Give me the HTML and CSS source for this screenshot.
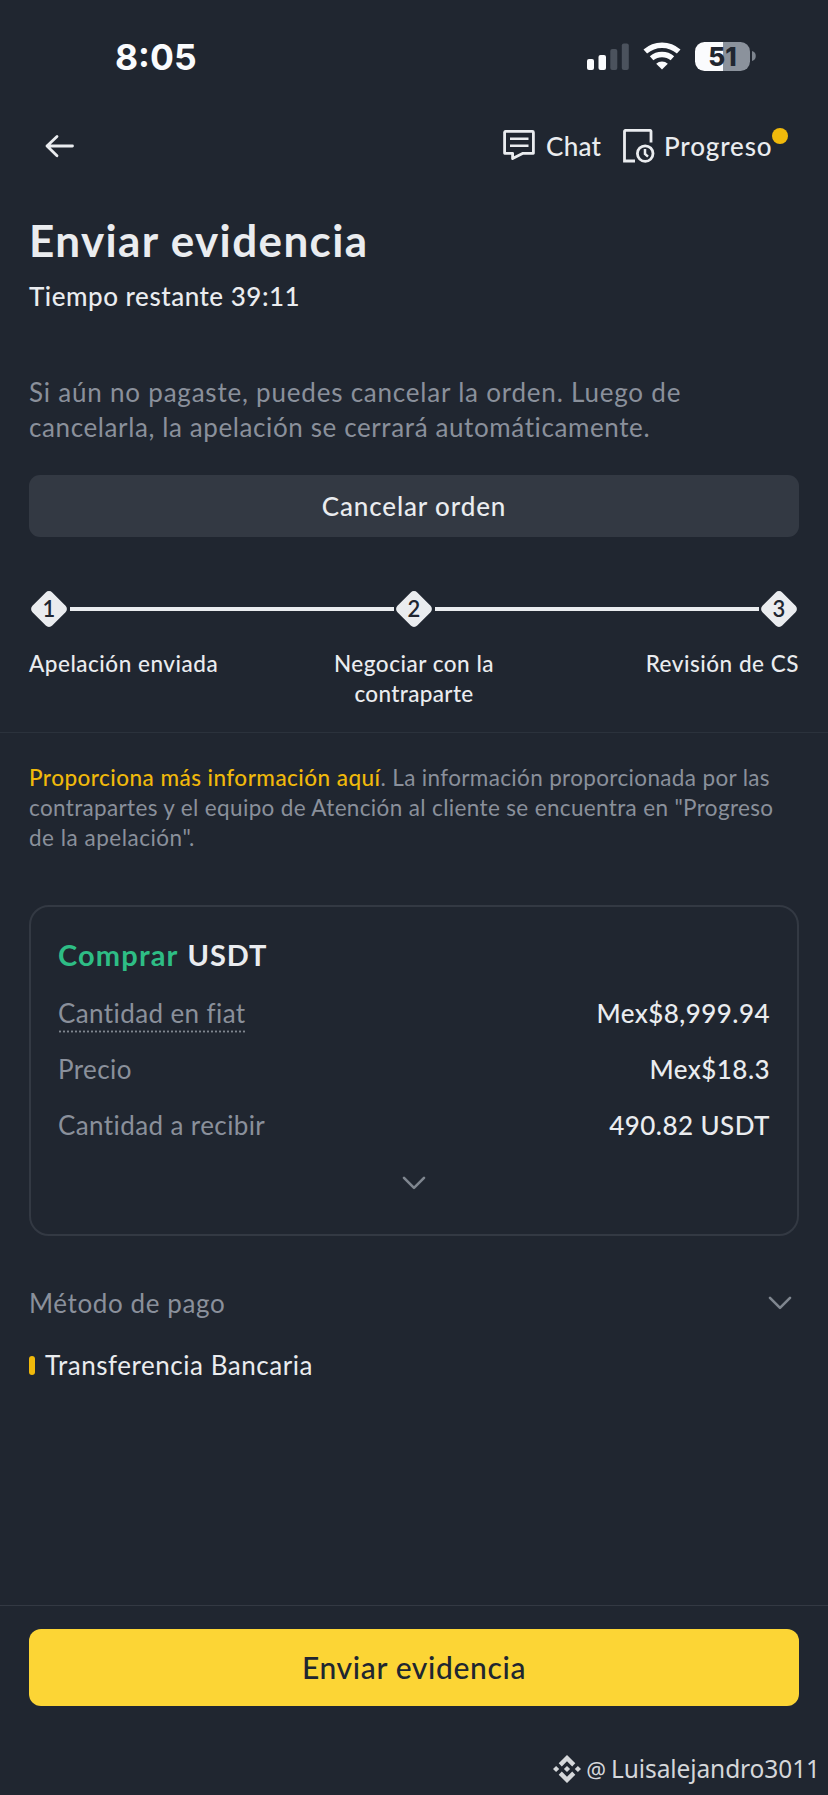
FILE: index.html
```html
<!DOCTYPE html>
<html lang="es">
<head>
<meta charset="utf-8">
<title>Enviar evidencia</title>
<link rel="stylesheet" href="styles.css">
</head>
<body>
<div class="screen">
  <div class="status">
    <span class="time">8:05</span>
    <div class="indicators">
      <svg class="signal" width="42" height="27" viewBox="0 0 42 27">
        <rect x="0" y="16" width="7" height="11" rx="2" fill="#fafbfd"/>
        <rect x="11.5" y="12" width="7.5" height="15" rx="2" fill="#fafbfd"/>
        <rect x="23.3" y="6" width="7" height="21" rx="2" fill="#4b525d"/>
        <rect x="34.8" y="0.5" width="7" height="26.5" rx="2" fill="#4b525d"/>
      </svg>
      <svg class="wifi" width="38" height="28" viewBox="0 0 38 28">
        <g fill="none" stroke="#fafbfd" stroke-width="5.4">
          <path d="M2.3 9.6A25 25 0 0 1 35.7 9.6"/>
          <path d="M8.6 16.3A16 16 0 0 1 29.4 16.3"/>
        </g>
        <path d="M19 27.5L13.2 21.8A8.5 8.5 0 0 1 24.8 21.8Z" fill="#fafbfd"/>
      </svg>
      <div class="battery">
        <div class="cell"><span>51</span></div>
        <svg width="4" height="10" viewBox="0 0 4 10"><path d="M0 0A5.2 5.2 0 0 1 0 10Z" fill="#7d848e"/></svg>
      </div>
    </div>
  </div>

  <header class="nav">
    <svg class="back" width="30" height="24" viewBox="0 0 30 24" fill="none" stroke="#eaecef" stroke-width="2.8" stroke-linecap="round" stroke-linejoin="round">
      <path d="M27.5 12H2M12 2.4L2 12L12 21.8"/>
    </svg>
    <div class="actions">
      <svg class="chat-icon" width="32" height="30" viewBox="0 0 32 30" fill="none" stroke="#eaecef" stroke-width="2.8">
        <path d="M1.6 2.2a1 1 0 0 1 1-.8H29.4a1 1 0 0 1 1 1V23.3H20L9.6 28.6V23.3H1.6Z" stroke-linejoin="round"/>
        <path d="M7 8.8H25.5M7 15.8H25.5" stroke-width="2.5"/>
      </svg>
      <span class="action chat">Chat</span>
      <svg class="progress-icon" width="32" height="34" viewBox="0 0 32 34" fill="none" stroke="#eaecef" stroke-width="2.8">
        <path d="M12 32H1.5V2.2a.8.8 0 0 1 .8-.8H27.2a.8.8 0 0 1 .8.8V13.5"/>
        <circle cx="22.2" cy="24.6" r="7.8"/>
        <path d="M22 20V25L25 27.6" stroke-width="2.5"/>
      </svg>
      <span class="action progreso">Progreso<i class="dot"></i></span>
    </div>
  </header>

  <main class="content">
    <h1 class="title">Enviar evidencia</h1>
    <p class="remaining">Tiempo restante 39:11</p>
    <p class="hint">Si aún no pagaste, puedes cancelar la orden. Luego de<br><span class="hint-last">cancelarla, la apelación se cerrará automáticamente.</span></p>
    <button class="cancel">Cancelar orden</button>

    <div class="track">
      <div class="step"><svg width="38" height="38" viewBox="0 0 38 38"><rect x="5" y="5" width="28" height="28" rx="4.6" transform="rotate(45 19 19)" fill="#eaecef"/></svg><span>1</span></div>
      <div class="line"></div>
      <div class="step"><svg width="38" height="38" viewBox="0 0 38 38"><rect x="5" y="5" width="28" height="28" rx="4.6" transform="rotate(45 19 19)" fill="#eaecef"/></svg><span>2</span></div>
      <div class="line"></div>
      <div class="step"><svg width="38" height="38" viewBox="0 0 38 38"><rect x="5" y="5" width="28" height="28" rx="4.6" transform="rotate(45 19 19)" fill="#eaecef"/></svg><span>3</span></div>
    </div>
    <div class="labels">
      <span class="label">Apelación enviada</span>
      <span class="label mid">Negociar con la<br><span class="tight">contraparte</span></span>
      <span class="label end">Revisión de CS</span>
    </div>
  </main>

  <section class="details">
    <p class="info"><b>Proporciona más información aquí</b>. La información proporcionada por las<br>contrapartes y el equipo de Atención al cliente se encuentra en "Progreso<br><span class="info-last">de la apelación".</span></p>

    <div class="card">
      <h2 class="pair"><span class="buy">Comprar</span> <span class="coin">USDT</span></h2>
      <div class="row"><span class="key dotted">Cantidad en fiat</span><span class="value">Mex$8,999.94</span></div>
      <div class="row"><span class="key">Precio</span><span class="value">Mex$18.3</span></div>
      <div class="row"><span class="key">Cantidad a recibir</span><span class="value">490.82 USDT</span></div>
      <div class="more"><svg width="24" height="14" viewBox="0 0 24 14" fill="none" stroke="#7f868f" stroke-width="2.6" stroke-linecap="round" stroke-linejoin="round"><path d="M2 1.8L12 11.8L22 1.8"/></svg></div>
    </div>

    <div class="method"><span>Método de pago</span><svg width="24" height="14" viewBox="0 0 24 14" fill="none" stroke="#7f868f" stroke-width="2.6" stroke-linecap="round" stroke-linejoin="round"><path d="M2 1.8L12 11.8L22 1.8"/></svg></div>
    <div class="bank"><i class="mark"></i><span>Transferencia Bancaria</span></div>
  </section>

  <footer class="footer">
    <button class="send">Enviar evidencia</button>
    <div class="credit">
      <svg width="28" height="28" viewBox="0 0 28 28" fill="#d5d7da">
        <path d="M14 0L22.3 8.3L19.2 11.4L14 6.2L8.8 11.4L5.7 8.3Z"/>
        <path d="M14 28L22.3 19.7L19.2 16.6L14 21.8L8.8 16.6L5.7 19.7Z"/>
        <path d="M3.1 10.9L6.2 14L3.1 17.1L0 14ZM24.9 10.9L28 14L24.9 17.1L21.8 14ZM14 10.9L17.1 14L14 17.1L10.9 14Z"/>
      </svg>
      <span class="at">@</span>
      <span class="user">Luisalejandro3011</span>
    </div>
  </footer>
</div>
</body>
</html>
```
FILE: styles.css
```css
* { box-sizing: border-box; margin: 0; padding: 0; }
body { background: #202630; color: #eaecef; font-family: Lato, "Open Sans", sans-serif; font-size: 26px; }
svg { display: block; flex: none; }
.screen { width: 828px; height: 1795px; display: flex; flex-direction: column; overflow: hidden; white-space: nowrap; }

.status { height: 113px; display: flex; justify-content: space-between; align-items: center; padding: 0 73px 0 115px; }
.time { margin-top: 2px; font: 700 35.5px/40px Inter, sans-serif; color: #fafbfd; }
.indicators { display: flex; align-items: center; gap: 14px; margin-right: -1px; }
.signal { margin-top: -1px; }
.wifi { margin-top: -1px; }
.battery { display: flex; align-items: center; gap: 2px; margin-top: -1px; }
.cell { width: 55px; height: 29px; border-radius: 9.5px; background: linear-gradient(90deg, #fafbfd 28px, #8b929c 28px); display: flex; align-items: center; justify-content: center; }
.cell span { font: 800 26px/29px Inter, sans-serif; color: #202630; }

.nav { height: 64px; display: flex; justify-content: space-between; align-items: center; padding: 0 55px 0 45px; }
.back { margin-top: 1px; }
.actions { display: flex; align-items: center; }
.action { font-weight: 500; line-height: 36px; }
.chat { margin: 1px 0 0 11px; letter-spacing: .3px; width: 57px; }
.progress-icon { margin: 1px 0 0 20px; }
.progreso { margin: 1px 0 0 9px; letter-spacing: .85px; position: relative; width: 109px; }
.dot { position: absolute; right: -15px; top: 0; width: 16px; height: 16px; border-radius: 50%; background: #f0b90b; }

.content { padding: 35px 29px 24px; border-bottom: 1px solid #2b323c; }
.title { font-size: 44px; font-weight: 700; line-height: 56px; letter-spacing: 1.38px; }
.remaining { margin-top: 10px; font-weight: 500; line-height: 36px; letter-spacing: .52px; }
.hint { margin-top: 61px; line-height: 35px; color: #8a909b; letter-spacing: .79px; }
.hint-last { letter-spacing: .61px; }
.cancel { display: block; width: 770px; height: 62px; margin-top: 30px; padding-bottom: 1px; border: 0; border-radius: 11px; background: #333943; color: #eaecef; font: 500 26px/36px Lato, sans-serif; letter-spacing: .86px; }

.track { display: flex; align-items: center; justify-content: space-between; margin: 53px 1px 0; height: 38px; }
.step { display: grid; place-items: center; }
.step svg, .step span { grid-area: 1 / 1; }
.step span { font-size: 22px; font-weight: 600; line-height: 26px; color: #202630; }
.line { width: 324px; height: 4px; background: #eaecef; }
.labels { display: grid; grid-template-columns: 1fr 1fr 1fr; margin: 21px 0 -1px; font-size: 22.5px; font-weight: 500; line-height: 30px; letter-spacing: .52px; }
.mid { text-align: center; }
.tight { letter-spacing: .35px; }
.end { text-align: right; }

.details { padding: 30px 29px 0; }
.info { font-size: 22.5px; line-height: 30px; color: #8a909b; letter-spacing: .35px; }
.info b { font-weight: 500; color: #f0b90b; letter-spacing: .46px; }
.info-last { letter-spacing: .5px; }

.card { height: 331px; margin-top: 52px; padding: 28px 27px 0; border: 2px solid #333943; border-radius: 20px; }
.pair { font-size: 29px; font-weight: 700; line-height: 40px; margin-bottom: 10px; display: flex; gap: 9px; }
.buy { color: #2ebd85; letter-spacing: 1.15px; }
.coin { letter-spacing: .9px; }
.row { height: 56px; display: flex; justify-content: space-between; align-items: center; line-height: 36px; }
.key { color: #8a909b; letter-spacing: .4px; }
.dotted { background: radial-gradient(circle, #7f868f 1px, transparent 1.2px) 0 100% / 4px 3px repeat-x; margin-bottom: -2px; padding-bottom: 2px; }
.value { font-weight: 500; letter-spacing: .45px; }
.more { display: flex; justify-content: center; padding-top: 23px; }

.method { height: 62px; margin-top: 36px; display: flex; align-items: center; justify-content: space-between; padding-right: 7px; color: #8a909b; letter-spacing: .6px; }
.bank { height: 62px; display: flex; align-items: center; gap: 10px; letter-spacing: .53px; }
.mark { width: 6px; height: 19px; border-radius: 3px; background: #f0b90b; }

.footer { margin-top: auto; height: 190px; border-top: 1px solid #333943; padding: 23px 29px 0; }
.send { display: block; width: 770px; height: 77px; padding-bottom: 2px; border: 0; border-radius: 12px; background: #fcd535; color: #202630; font: 500 30px/40px Lato, sans-serif; letter-spacing: .65px; }
.credit { display: flex; align-items: center; justify-content: flex-end; margin: 45px -21px 0 0; height: 36px; color: #d5d7da; font: 400 24.5px/36px "Noto Sans", sans-serif; }
.at { font-size: 22px; margin: 0 5px; }
.user { letter-spacing: -.1px; }
```
